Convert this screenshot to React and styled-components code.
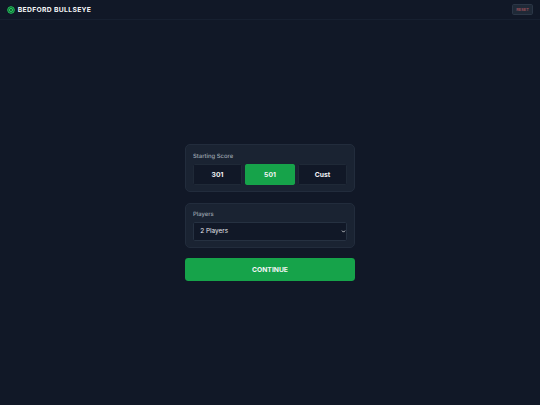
import React, { useState } from 'react'
import styled, { createGlobalStyle } from 'styled-components'
import { ChevronDown } from 'lucide-react'

const Global = createGlobalStyle`
  html, body { margin: 0; padding: 0; height: 100%; }
  body {
    background: #111827;
    font-family: Inter, "Liberation Sans", sans-serif;
    text-rendering: geometricPrecision;
  }
`

const Page = styled.div`
  display: flex;
  flex-direction: column;
  height: 405px;
  background: #111827;
`

const Header = styled.header`
  display: flex;
  align-items: center;
  justify-content: space-between;
  height: 20px;
  box-sizing: border-box;
  padding: 0 6.75px;
  border-bottom: 1px solid #172030;
`

const Brand = styled.div`
  display: flex;
  align-items: center;
  gap: 3px;
`

const BrandName = styled.span`
  font-size: 6.75px;
  font-weight: 700;
  letter-spacing: 0.34px;
  color: #f3f4f6;
`

const ResetButton = styled.button`
  width: 21.5px;
  height: 10.5px;
  padding: 0;
  background: #1f2937;
  border: 0.5px solid #2b3646;
  border-radius: 1.7px;
  color: #99505a;
  font-family: inherit;
  font-size: 4px;
  font-weight: 600;
`

const Main = styled.main`
  flex: 1;
  display: flex;
  flex-direction: column;
  justify-content: center;
  align-items: center;
  padding-top: 0.5px;
`

const Column = styled.div`
  display: flex;
  flex-direction: column;
  gap: 10.1px;
  width: 169.5px;
`

const Card = styled.section`
  box-sizing: border-box;
  padding: 7.5px 6.75px 6px;
  background: #1a2332;
  border: 0.5px solid #222c3c;
  border-radius: 5px;
`

const Label = styled.div`
  font-size: 5.9px;
  line-height: 8.4px;
  font-weight: 500;
  color: #9ca3af;
  margin-bottom: 2.6px;
`

const ScoreRow = styled.div`
  display: grid;
  grid-template-columns: repeat(3, 1fr);
  gap: 3.4px;
`

const ScoreButton = styled.button`
  height: 21.5px;
  padding: 0;
  border-radius: 1.7px;
  border: 0.5px solid ${p => (p.$active ? '#16a34a' : '#1f2937')};
  background: ${p => (p.$active ? '#16a34a' : '#111827')};
  color: #f3f4f6;
  font-family: inherit;
  font-size: 6.75px;
  font-weight: 700;
`

const SelectWrap = styled.div`
  position: relative;
  color: #e5e7eb;
`

const PlayerSelect = styled.select`
  display: block;
  width: 100%;
  height: 18.5px;
  padding: 0 6.25px;
  box-sizing: border-box;
  appearance: none;
  border: 0.5px solid #263141;
  border-radius: 1.7px;
  background-color: #111827;
  color: #e5e7eb;
  font-family: inherit;
  font-size: 6.4px;
`

const SelectArrow = styled(ChevronDown)`
  position: absolute;
  right: 1.5px;
  top: 6.7px;
  width: 5px;
  height: 5px;
  pointer-events: none;
`

const ContinueButton = styled.button`
  height: 23.5px;
  padding: 0;
  border: none;
  border-radius: 3.4px;
  background: #16a34a;
  color: #f3f4f6;
  font-family: inherit;
  font-size: 6.75px;
  font-weight: 700;
`

const scores = ['301', '501', 'Cust']

export default function App() {
  const [score, setScore] = useState('501')
  const [players, setPlayers] = useState('2')

  return (
    <Page>
      <Global />
      <Header>
        <Brand>
          <svg width="8" height="8" viewBox="0 0 24 24" fill="none" stroke="#22c55e" strokeWidth="3">
            <circle cx="12" cy="12" r="10" fill="#14532d" />
            <circle cx="12" cy="12" r="5" />
            <circle cx="12" cy="12" r="1.5" fill="#22c55e" stroke="none" />
          </svg>
          <BrandName>BEDFORD BULLSEYE</BrandName>
        </Brand>
        <ResetButton>RESET</ResetButton>
      </Header>
      <Main>
        <Column>
          <Card>
            <Label>Starting Score</Label>
            <ScoreRow>
              {scores.map(s => (
                <ScoreButton key={s} $active={s === score} onClick={() => setScore(s)}>
                  {s}
                </ScoreButton>
              ))}
            </ScoreRow>
          </Card>
          <Card>
            <Label>Players</Label>
            <SelectWrap>
              <PlayerSelect value={players} onChange={e => setPlayers(e.target.value)}>
                <option value="1">1 Player</option>
                <option value="2">2 Players</option>
                <option value="3">3 Players</option>
                <option value="4">4 Players</option>
              </PlayerSelect>
              <SelectArrow strokeWidth={4} />
            </SelectWrap>
          </Card>
          <ContinueButton>CONTINUE</ContinueButton>
        </Column>
      </Main>
    </Page>
  )
}
